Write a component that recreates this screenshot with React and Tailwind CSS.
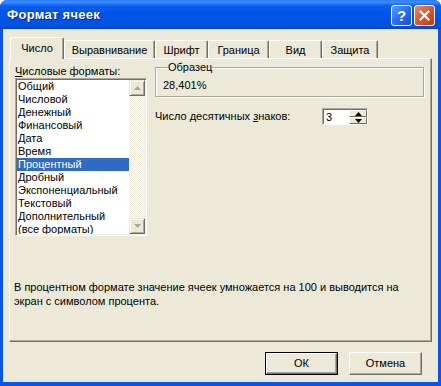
import React from "react";

const items = [
  "Общий",
  "Числовой",
  "Денежный",
  "Финансовый",
  "Дата",
  "Время",
  "Процентный",
  "Дробный",
  "Экспоненциальный",
  "Текстовый",
  "Дополнительный",
  "(все форматы)",
];

const tabs = [
  { label: "Выравнивание", w: "w-[91px]" },
  { label: "Шрифт", w: "w-[53px]" },
  { label: "Граница", w: "w-[61px]" },
  { label: "Вид", w: "w-[53px]" },
  { label: "Защита", w: "w-[56px]" },
];

function Arrow({ up, color = "#ACA899" }) {
  return (
    <svg width="7" height="4" viewBox="0 0 7 4">
      {up ? (
        <polygon points="0,4 3.5,0 7,4" fill={color} />
      ) : (
        <polygon points="0,0 3.5,4 7,0" fill={color} />
      )}
    </svg>
  );
}

function ScrollBtn({ up }) {
  return (
    <div className="h-[16px] w-[16px] flex items-center justify-center bg-[#ECE9D8] border border-t-[#ECE9D8] border-l-[#ECE9D8] border-r-[#716F64] border-b-[#716F64] shadow-[inset_1px_1px_0_#fff,inset_-1px_-1px_0_#ACA899]">
      <Arrow up={up} color="#ACA899" />
    </div>
  );
}

export default function App() {
  return (
    <div className="w-[441px] h-[386px] flex flex-col bg-[#0A55E8] rounded-t-[7px] overflow-hidden font-['Liberation_Sans',Arial,sans-serif] text-[11px] text-black">
      {/* Title bar */}
      <div className="h-[29px] shrink-0 flex items-center pl-[7px] pr-[6px] bg-[linear-gradient(to_bottom,#2E7BFF_0px,#3D8FFF_2px,#0B5EF0_6px,#0055EA_12px,#0054E3_22px,#0050DC_27px,#003FCC_29px)]">
        <div className="flex-1 text-white font-bold text-[13px] tracking-[0.3px] leading-[16px] [text-shadow:1px_1px_0_#0A1E8C]">
          Формат ячеек
        </div>
        <div className="flex gap-[2px] mt-[1px]">
          <div className="w-[21px] h-[21px] rounded-[3px] border border-white bg-[linear-gradient(135deg,#5A9BFF,#2C6BF0_50%,#1B4FD6)] flex items-center justify-center text-white font-bold text-[15px] leading-none">
            ?
          </div>
          <div className="w-[21px] h-[21px] rounded-[3px] border border-white bg-[linear-gradient(135deg,#F08A6A,#E0552B_50%,#C23A13)] flex items-center justify-center">
            <svg width="11" height="11" viewBox="0 0 11 11">
              <path d="M1.5 1.5 L9.5 9.5 M9.5 1.5 L1.5 9.5" stroke="#fff" strokeWidth="2.2" strokeLinecap="square" />
            </svg>
          </div>
        </div>
      </div>

      {/* Body */}
      <div className="flex-1 mx-[3px] mb-[4px] bg-[#ECE9D8] flex flex-col pt-[8px] pl-[6px] pr-[6px]">
        {/* Tabs */}
        <div className="h-[21px] flex items-end pl-[1px]">
          <div className="relative z-10 w-[54px] h-[22px] -mb-[1px] bg-[#ECE9D8] border-l border-t border-white border-r border-r-[#716F64] rounded-t-[2px] shadow-[inset_-1px_0_0_#ACA899] flex justify-center pt-[4px] leading-[13px]">
            Число
          </div>
          {tabs.map((t) => (
            <div
              key={t.label}
              className={`${t.w} h-[18px] border-l border-t border-white border-r border-r-[#716F64] rounded-t-[2px] shadow-[inset_-1px_0_0_#ACA899] flex justify-center pt-[3px] leading-[13px]`}
            >
              {t.label}
            </div>
          ))}
        </div>

        {/* Panel */}
        <div className="h-[284px] border-l border-t border-white border-r border-b border-r-[#716F64] border-b-[#716F64] shadow-[inset_-1px_-1px_0_#ACA899] flex flex-col pl-[5px] pt-[2px]">
          <div className="flex gap-[8px]">
            {/* Left column */}
            <div className="w-[132px] flex flex-col mt-[4px]">
              <div className="leading-[13px] h-[13px]">
                <span className="underline underline-offset-[1px]">Ч</span>исловые форматы:
              </div>
              <div className="mt-0 h-[158px] flex border border-t-[#ACA899] border-l-[#ACA899] border-r-white border-b-white shadow-[inset_1px_1px_0_#716F64,inset_-1px_-1px_0_#F1EFE2]">
                <div className="flex-1 flex bg-white m-[1px] overflow-hidden">
                  <div className="flex-1 flex flex-col overflow-hidden">
                    {items.map((it) => (
                      <div
                        key={it}
                        className={`h-[13px] shrink-0 leading-[13px] pl-[1px] whitespace-nowrap ${
                          it === "Процентный" ? "bg-[#316AC5] text-white" : ""
                        }`}
                      >
                        {it}
                      </div>
                    ))}
                  </div>
                  <div className="w-[16px] flex flex-col">
                    <ScrollBtn up />
                    <div className="flex-1 bg-[repeating-conic-gradient(#ECE9D8_0_25%,#FFFFFF_0_50%)] bg-[length:2px_2px]" />
                    <ScrollBtn />
                  </div>
                </div>
              </div>
            </div>

            {/* Right column */}
            <div className="w-[269px] flex flex-col">
              <fieldset className="h-[36px] border border-[#ACA899] shadow-[inset_1px_1px_0_#fff,1px_1px_0_#fff] pl-[7px] pt-[5px]">
                <legend className="ml-[5px] px-0 leading-[13px]">Образец</legend>
                <div className="leading-[13px]">28,401%</div>
              </fieldset>
              <div className="mt-[11px] flex items-center h-[17px]">
                <div className="w-[167px] leading-[13px]">
                  Число десятичных <span className="underline underline-offset-[1px]">з</span>наков:
                </div>
                <div className="w-[46px] h-[17px] flex border border-t-[#ACA899] border-l-[#ACA899] border-r-white border-b-white shadow-[inset_1px_1px_0_#716F64]">
                  <div className="flex-1 bg-white ml-[1px] mt-[1px] pl-[2px] leading-[14px]">3</div>
                  <div className="w-[18px] flex flex-col bg-white mt-[1px]">
                    <div className="flex-1 flex items-center justify-center bg-[#ECE9D8] border-t border-l border-white border-r border-b border-r-[#716F64] border-b-[#716F64]">
                      <Arrow up color="#000" />
                    </div>
                    <div className="flex-1 flex items-center justify-center bg-[#ECE9D8] border-t border-l border-white border-r border-b border-r-[#716F64] border-b-[#716F64]">
                      <Arrow color="#000" />
                    </div>
                  </div>
                </div>
              </div>
            </div>
          </div>

          <div className="mt-[44px] -ml-[1px] leading-[14px] w-[410px]">
            В процентном формате значение ячеек умножается на 100 и выводится на экран с символом процента.
          </div>
        </div>

        {/* Buttons */}
        <div className="mt-[10px] flex justify-end gap-[11px] pr-[10px]">
          <div className="w-[73px] h-[23px] border border-black flex">
            <div className="flex-1 flex items-center justify-center border border-t-white border-l-white border-r-[#716F64] border-b-[#716F64] shadow-[inset_-1px_-1px_0_#ACA899]">
              ОК
            </div>
          </div>
          <div className="w-[73px] h-[23px] flex items-center justify-center border border-t-white border-l-white border-r-[#716F64] border-b-[#716F64] shadow-[inset_-1px_-1px_0_#ACA899]">
            Отмена
          </div>
        </div>
      </div>
    </div>
  );
}
